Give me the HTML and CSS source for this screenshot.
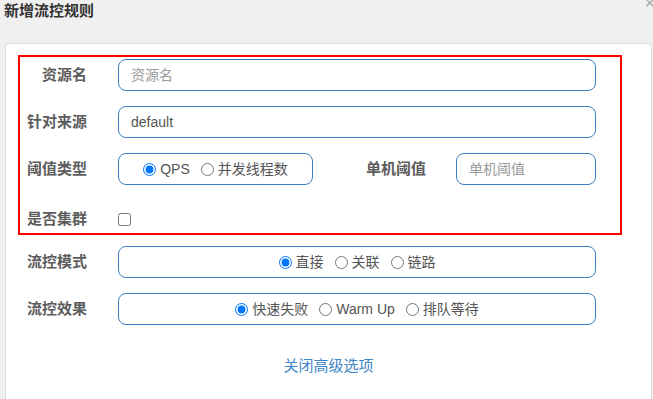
FILE: index.html
```html
<!DOCTYPE html>
<html lang="zh-CN">
<head>
<meta charset="utf-8">
<title>新增流控规则</title>
<link rel="stylesheet" href="styles.css">
</head>
<body>
<div class="dialog">
  <div class="dialog-header">
    <span class="dialog-title">新增流控规则</span>
    <span class="dialog-close">×</span>
  </div>
  <div class="panel">
    <div class="highlight">
      <div class="row">
        <label class="label">资源名</label>
        <input class="input" type="text" placeholder="资源名">
      </div>
      <div class="row">
        <label class="label">针对来源</label>
        <input class="input" type="text" value="default">
      </div>
      <div class="row">
        <label class="label">阈值类型</label>
        <div class="radio-box radio-box-small">
          <label class="radio"><input type="radio" name="grade" checked><span>QPS</span></label>
          <label class="radio"><input type="radio" name="grade"><span>并发线程数</span></label>
        </div>
        <label class="label label-inline">单机阈值</label>
        <input class="input input-small" type="text" placeholder="单机阈值">
      </div>
      <div class="row row-check">
        <label class="label label-check">是否集群</label>
        <input class="checkbox" type="checkbox">
      </div>
    </div>
    <div class="rows-outer">
      <div class="row">
        <label class="label">流控模式</label>
        <div class="radio-box">
          <label class="radio"><input type="radio" name="strategy" checked><span>直接</span></label>
          <label class="radio"><input type="radio" name="strategy"><span>关联</span></label>
          <label class="radio"><input type="radio" name="strategy"><span>链路</span></label>
        </div>
      </div>
      <div class="row">
        <label class="label">流控效果</label>
        <div class="radio-box">
          <label class="radio"><input type="radio" name="behavior" checked><span>快速失败</span></label>
          <label class="radio"><input type="radio" name="behavior"><span>Warm Up</span></label>
          <label class="radio"><input type="radio" name="behavior"><span>排队等待</span></label>
        </div>
      </div>
    </div>
    <div class="toggle">
      <a class="toggle-link" href="#">关闭高级选项</a>
    </div>
  </div>
</div>
</body>
</html>
```

FILE: styles.css
```css
html, body {
  margin: 0;
  padding: 0;
  background: #f0f0f0;
  overflow: hidden;
}

body {
  width: 653px;
  height: 399px;
  font-family: "Liberation Sans", "Noto Sans CJK SC", sans-serif;
  color: #555;
}

.dialog {
  position: relative;
}

.dialog-header {
  height: 43px;
  padding-left: 4px;
  box-sizing: border-box;
}

.dialog-title {
  display: block;
  font-size: 15px;
  line-height: 22px;
  font-weight: 700;
  color: #333;
}

.dialog-close {
  position: absolute;
  top: -6px;
  right: -2px;
  font-size: 18px;
  line-height: 18px;
  color: #aaa;
}

.panel {
  margin-left: 5px;
  width: 647px;
  height: 356px;
  box-sizing: border-box;
  background: #fff;
  border: 1px solid #ddd;
  border-bottom: none;
  border-radius: 4px 4px 0 0;
  padding-top: 11px;
}

.highlight {
  margin-left: 12px;
  width: 604px;
  box-sizing: border-box;
  border: 2px solid #f00;
  padding: 2px 24px 0 0;
}

.rows-outer {
  margin: 11px 0 0 14px;
  width: 576px;
}

.row {
  display: flex;
  align-items: center;
  height: 32px;
  margin-bottom: 15px;
}

.highlight .row-check {
  height: 33px;
  margin-bottom: 0;
  align-items: flex-start;
}

.label {
  width: 67px;
  flex: none;
  margin-right: 31px;
  text-align: right;
  font-size: 15px;
  font-weight: 700;
  line-height: 32px;
  color: #5c5c5c;
  white-space: nowrap;
}

.label-check {
  line-height: 20px;
  padding-top: 9px;
}

.label-inline {
  width: 113px;
  margin-right: 30px;
}

.input {
  flex: 1;
  min-width: 0;
  height: 32px;
  box-sizing: border-box;
  border: 1px solid #3b7ebf;
  border-radius: 8px;
  padding: 0 12px;
  font-family: inherit;
  font-size: 14px;
  color: #555;
  background: #fff;
  outline: none;
}

.input::placeholder {
  color: #999;
}

.input-small {
  flex: none;
  width: 140px;
}

.radio-box {
  flex: 1;
  height: 32px;
  box-sizing: border-box;
  border: 1px solid #3b7ebf;
  border-radius: 8px;
  display: flex;
  align-items: center;
  justify-content: center;
  gap: 11px;
  font-size: 14px;
  color: #555;
}

.radio-box-small {
  flex: none;
  width: 195px;
}

.radio {
  display: flex;
  align-items: center;
  gap: 4px;
  line-height: 20px;
  white-space: nowrap;
}

.radio input {
  margin: 0;
  width: 13px;
  height: 13px;
}

.checkbox {
  margin: 13px 0 0;
  width: 13px;
  height: 13px;
}

.toggle {
  margin-top: 31px;
  text-align: center;
  line-height: 20px;
}

.toggle-link {
  font-size: 15px;
  color: #3d85c6;
  text-decoration: none;
}
```
